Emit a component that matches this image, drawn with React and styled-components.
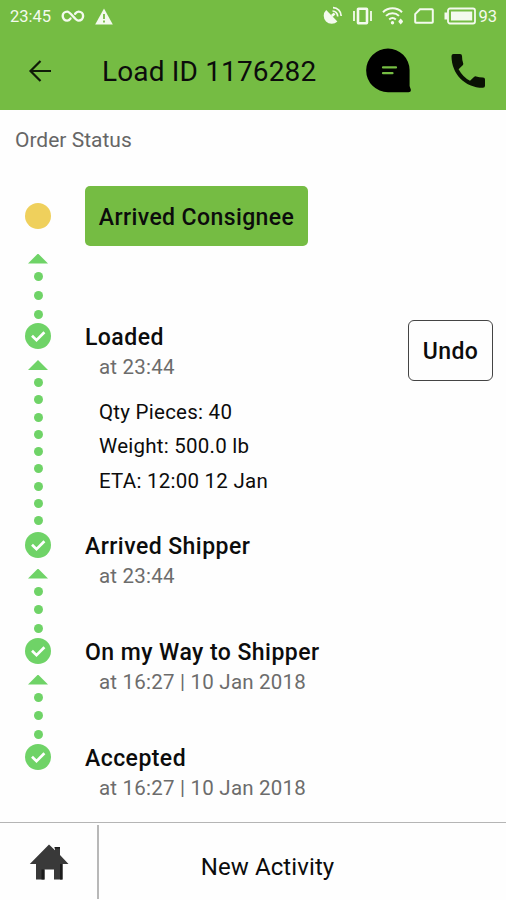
import * as React from 'react';
import styled, {createGlobalStyle} from 'styled-components';

const GlobalStyle = createGlobalStyle`
  * {
    box-sizing: border-box;
  }
  body {
    margin: 0;
    background: #fefefe;
    font-family: Roboto, 'Liberation Sans', sans-serif;
  }
`;

const Screen = styled.div`
  width: 506px;
  height: 900px;
  overflow: hidden;
  display: flex;
  flex-direction: column;
  color: #0c0c0c;
`;

const Header = styled.header`
  height: 109.5px;
  flex: none;
  background: #75bc43;
`;

const StatusBar = styled.div`
  height: 32px;
  padding: 0 9px 0 10px;
  display: flex;
  align-items: center;
  justify-content: space-between;
  color: #f4faee;
  font-size: 16.5px;
`;

const StatusGroup = styled.div`
  display: flex;
  align-items: center;
  gap: ${props => props.$gap}px;
`;

const BatteryGroup = styled.div`
  display: flex;
  align-items: center;
  gap: 2px;
`;

const Toolbar = styled.div`
  height: 77px;
  padding: 0 20px 0 28px;
  display: flex;
  align-items: center;
`;

const Title = styled.h1`
  flex: 1;
  margin: 3px 0 0 50px;
  font-size: 28px;
  font-weight: 400;
  line-height: 34px;
  letter-spacing: 0.15px;
`;

const ToolbarActions = styled.div`
  display: flex;
  align-items: center;
  gap: 39px;
`;

const Content = styled.main`
  height: 712.5px;
  flex: none;
  padding: 16.5px 13px 0 15px;
`;

const SectionLabel = styled.div`
  height: 59.5px;
  font-size: 21px;
  line-height: 28px;
  color: #666;
`;

const Step = styled.section`
  height: ${props => props.$height}px;
  display: flex;
`;

const Rail = styled.div`
  width: 70px;
  padding: ${props => (props.$pending ? 17 : 0)}px 0 ${props => props.$end}px 10px;
  display: flex;
  flex-direction: column;
`;

const PendingNode = styled.div`
  width: 26px;
  height: 26px;
  flex: none;
  border-radius: 50%;
  background: #efd05c;
`;

const DoneNode = styled.svg`
  width: 26px;
  height: 26px;
  flex: none;
  display: block;
`;

const ArrowHead = styled.div`
  width: 20px;
  height: 10px;
  flex: none;
  margin: ${props => (props.$pending ? 25 : 11)}px 0 8px 3px;
  background: #6fd367;
  clip-path: polygon(50% 0, 100% 100%, 0 100%);
`;

const Dots = styled.div`
  width: 26px;
  flex: 1;
  display: flex;
  flex-direction: column;
  align-items: center;
  justify-content: space-between;
`;

const Dot = styled.div`
  width: 9px;
  height: 9px;
  border-radius: 50%;
  background: #6fd367;
`;

const StepBody = styled.div`
  flex: 1;
`;

const StepTitle = styled.h2`
  margin: 1px 0 0;
  font-size: 23px;
  font-weight: 500;
  line-height: 28px;
  letter-spacing: 0.45px;
`;

const StepTime = styled.div`
  padding-left: 14px;
  font-size: 20.5px;
  line-height: 31px;
  letter-spacing: 0.22px;
  color: #6c6c6c;
`;

const Details = styled.div`
  padding: 12px 0 0 14px;
  font-size: 20.5px;
  line-height: 34.3px;
  letter-spacing: 0.25px;
`;

const CurrentButton = styled.button`
  width: 223px;
  height: 60px;
  padding: 3px 0 0;
  border: 0;
  border-radius: 5px;
  background: #75bc43;
  color: #0c0c0c;
  font: 500 23px Roboto, sans-serif;
  letter-spacing: 0.4px;
`;

const UndoButton = styled.button`
  width: 85px;
  height: 61px;
  margin-top: -3.5px;
  padding: 3px 0 0;
  border: 1.5px solid #444;
  border-radius: 6px;
  background: #fefefe;
  color: #0c0c0c;
  font: 500 23px Roboto, sans-serif;
  letter-spacing: 0.45px;
`;

const Footer = styled.footer`
  height: 78px;
  flex: none;
  border-top: 1.5px solid #b5b5b5;
  display: flex;
`;

const HomeCell = styled.div`
  width: 99px;
  height: 74px;
  margin-top: 2px;
  padding: 0 0 1px 29px;
  display: flex;
  align-items: center;
  border-right: 2px solid #b8b8b8;
`;

const NewActivity = styled.div`
  flex: 1;
  padding: 10px 70px 0 0;
  display: flex;
  align-items: center;
  justify-content: center;
  font-size: 24px;
  letter-spacing: 0.1px;
`;

const InfinityIcon = () => (
  <svg width="24" height="14" viewBox="0 0 24 14" fill="none" stroke="currentColor" strokeWidth="2.4" strokeLinecap="round">
    <path d="M9.5 9.6C8.5 11 7.5 11.6 6.2 11.6a4.5 4.5 0 0 1 0-9C9.8 2.6 13.8 11.6 17.6 11.6a4.5 4.5 0 0 0 0-9c-1.4 0-2.5.7-3.5 2.1" />
  </svg>
);

const WarningIcon = () => (
  <svg width="18" height="17" viewBox="0 0 18 17">
    <path d="M9 .5 17.8 16.5H.2Z" fill="currentColor" />
    <path d="M9 6v5M9 12.5v2" stroke="#75bc43" strokeWidth="1.8" />
  </svg>
);

const SatelliteIcon = () => (
  <svg width="20" height="20" viewBox="0 0 20 20" fill="none" stroke="currentColor">
    <path d="M3.2 4A7.8 7.8 0 1 0 14.4 15.6Z" fill="currentColor" stroke="none" />
    <path d="M8.8 10 11.6 7.6" strokeWidth="2.6" />
    <path d="M9.5 5a5.3 5.3 0 0 1 5.2 5.4M10 1.6a8.4 8.4 0 0 1 8.2 8.4" strokeWidth="1.7" />
  </svg>
);

const VibrateIcon = () => (
  <svg width="19" height="18" viewBox="0 0 19 18" fill="none" stroke="currentColor">
    <rect x="5" y="1.8" width="9" height="14.4" rx="0.6" strokeWidth="2.6" />
    <path d="M1 4v10M18 4v10" strokeWidth="1.8" />
  </svg>
);

const WifiIcon = () => (
  <svg width="22" height="18" viewBox="0 0 22 18" fill="none" stroke="currentColor" strokeWidth="2">
    <path d="M1 5.2a13.5 13.5 0 0 1 19 0M4 8.9a9.2 9.2 0 0 1 13 0M7.2 12.4a4.8 4.8 0 0 1 6.6 0" />
    <circle cx="10.5" cy="15.8" r="1.7" fill="currentColor" stroke="none" />
    <path d="m16.5 14 2.2-2.5 2.2 2.5v1l-2.2 2.5-2.2-2.5Z" fill="currentColor" stroke="none" />
  </svg>
);

const SimIcon = () => (
  <svg width="20" height="16" viewBox="0 0 20 16" fill="none" stroke="currentColor" strokeWidth="2">
    <path d="M6 1.3h12q.8 0 .8.8v11.8q0 .8-.8.8H2q-.8 0-.8-.8V6.1Z" />
  </svg>
);

const BatteryIcon = () => (
  <svg width="32" height="18" viewBox="0 0 32 18">
    <rect x="4" y="1.5" width="27" height="15" rx="2" fill="none" stroke="currentColor" strokeWidth="1.8" />
    <path d="M3.5 5.5H.5v7h3ZM7 4.4h21.2v9.2H7Z" fill="currentColor" />
  </svg>
);

const BackIcon = () => (
  <svg width="24" height="24" viewBox="0 0 24 24" fill="none" stroke="#101c08" strokeWidth="2.2">
    <path d="M23 12H3M12.5 2 2.5 12l10 10" />
  </svg>
);

const ChatIcon = () => (
  <svg width="45" height="45" viewBox="0 0 45 45">
    <path
      d="M22 .5A21.8 21.8 0 0 1 43.6 22V38l1.2 3.4q.6 2.8-2.3 2.8H22A21.8 21.8 0 0 1 22 .5Z"
      fill="#000"
    />
    <path d="M17 19.4h13M17 25.2h9.5" stroke="#75bc43" strokeWidth="2.2" strokeLinecap="round" />
  </svg>
);

const PhoneIcon = () => (
  <svg width="36" height="36" viewBox="0 0 36 36">
    <path
      d="M3.5 1H10q2 0 2 2 0 4 1.2 7.2.4 1.2-.5 2.1L8.6 16.2Q13 24.2 20 27.8L24 23.9q1-1 2.2-.5Q29.4 24.4 33 24.4q2 0 2 2v6.4q0 2-2 2C14.5 34.8 1.5 20.5 1.5 3q0-2 2-2Z"
      fill="#0a1204"
    />
  </svg>
);

const HomeIcon = () => (
  <svg width="40" height="36" viewBox="0 0 40 36">
    <path d="M20 .5 26 6.2V3h5v8L39.5 20H33.5V35.5H25V25.5H15.5V35.5H7V20H.8Z" fill="#393939" />
    <path d="M12.5 25.5h3v10h-3ZM31 20h2.5v15.5H31ZM25.5 3H31v1.5h-5.5Z" fill="#1c1c1c" />
  </svg>
);

const CheckNode = () => (
  <DoneNode viewBox="0 0 26 26">
    <circle cx="13" cy="13" r="13" fill="#6fd367" />
    <path d="m7 12.7 4.5 4.4 7.9-7.8" fill="none" stroke="#fff" strokeWidth="2.7" />
  </DoneNode>
);

const StepRail = ({pending, dots, end}) => (
  <Rail $pending={pending} $end={end}>
    {pending ? <PendingNode /> : <CheckNode />}
    {dots > 0 && (
      <>
        <ArrowHead $pending={pending} />
        <Dots>
          {Array.from({length: dots}, (_, i) => (
            <Dot key={i} />
          ))}
        </Dots>
      </>
    )}
  </Rail>
);

const steps = [
  {
    title: 'Loaded',
    time: 'at 23:44',
    details: ['Qty Pieces: 40', 'Weight: 500.0 lb', 'ETA: 12:00 12 Jan'],
    undo: true,
    height: 208.5,
    dots: 9,
    end: 6.5,
  },
  {title: 'Arrived Shipper', time: 'at 23:44', height: 106, dots: 3, end: 4.5},
  {title: 'On my Way to Shipper', time: 'at 16:27 | 10 Jan 2018', height: 106, dots: 3, end: 4.5},
  {title: 'Accepted', time: 'at 16:27 | 10 Jan 2018', height: 70, dots: 0, end: 0},
];

const App = () => (
  <Screen>
    <GlobalStyle />
    <Header>
      <StatusBar>
        <StatusGroup $gap={10}>
          <span>23:45</span>
          <InfinityIcon />
          <WarningIcon />
        </StatusGroup>
        <StatusGroup $gap={10}>
          <SatelliteIcon />
          <VibrateIcon />
          <WifiIcon />
          <SimIcon />
          <BatteryGroup>
            <BatteryIcon />
            <span>93</span>
          </BatteryGroup>
        </StatusGroup>
      </StatusBar>
      <Toolbar>
        <BackIcon />
        <Title>Load ID 1176282</Title>
        <ToolbarActions>
          <ChatIcon />
          <PhoneIcon />
        </ToolbarActions>
      </Toolbar>
    </Header>
    <Content>
      <SectionLabel>Order Status</SectionLabel>
      <Step $height={137.5}>
        <StepRail pending dots={3} end={4} />
        <StepBody>
          <CurrentButton>Arrived Consignee</CurrentButton>
        </StepBody>
      </Step>
      {steps.map(step => (
        <Step key={step.title} $height={step.height}>
          <StepRail dots={step.dots} end={step.end} />
          <StepBody>
            <StepTitle>{step.title}</StepTitle>
            <StepTime>{step.time}</StepTime>
            {step.details && (
              <Details>
                {step.details.map(line => (
                  <div key={line}>{line}</div>
                ))}
              </Details>
            )}
          </StepBody>
          {step.undo && <UndoButton>Undo</UndoButton>}
        </Step>
      ))}
    </Content>
    <Footer>
      <HomeCell>
        <HomeIcon />
      </HomeCell>
      <NewActivity>New Activity</NewActivity>
    </Footer>
  </Screen>
);

export default App;
